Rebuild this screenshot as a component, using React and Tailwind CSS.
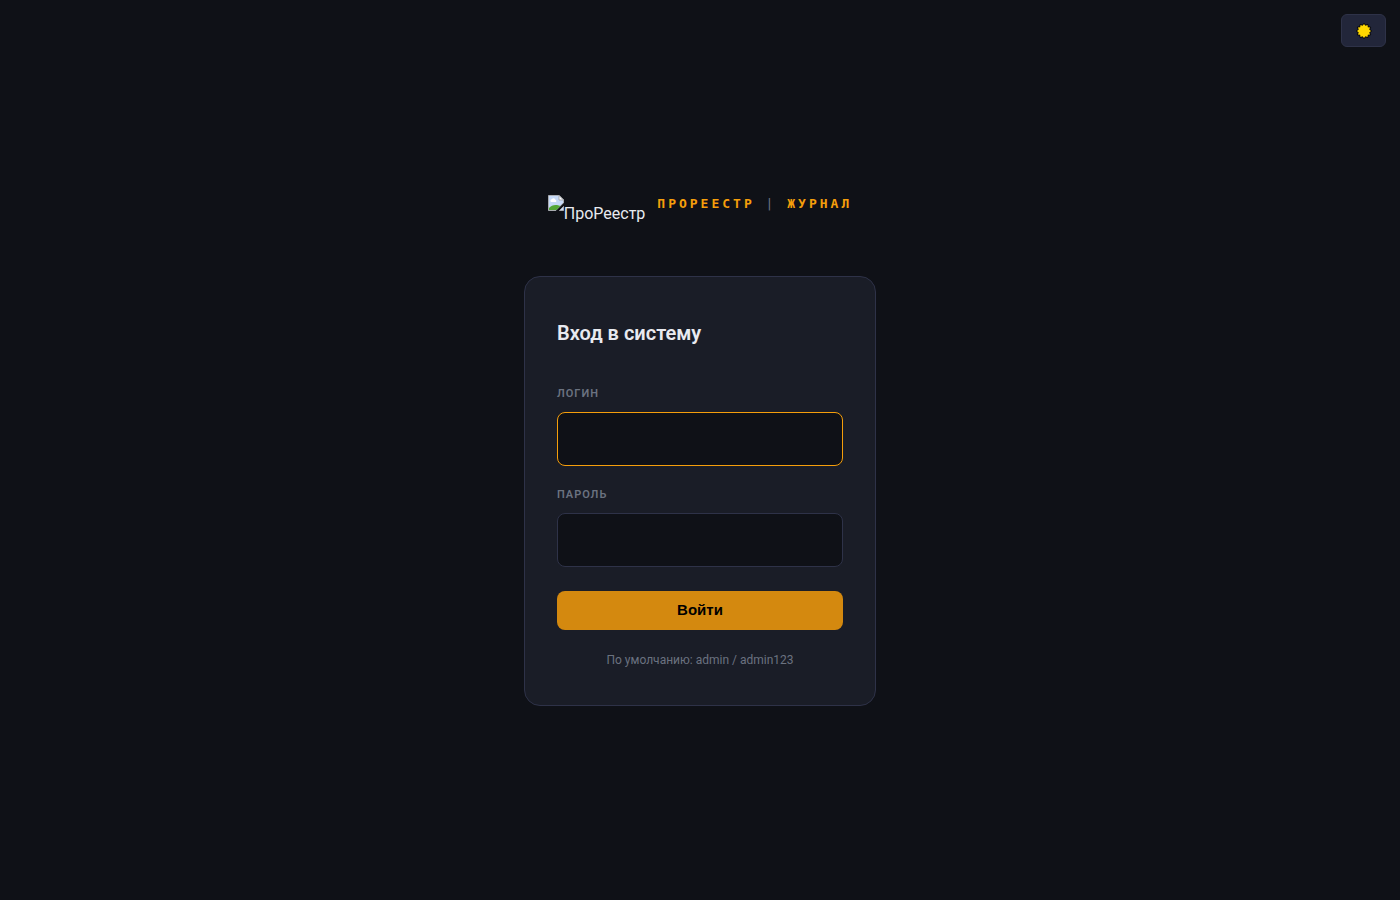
// Login page
const FIELDS = [
  { id: "login", label: "Логин", type: "text", autoFocus: true },
  { id: "password", label: "Пароль", type: "password" },
];

// 12-pointed star, used twice: dark rim and yellow body
function star(outer, inner) {
  return Array.from({ length: 24 }, (_, i) => {
    const r = i % 2 ? inner : outer;
    const a = (i * Math.PI) / 12;
    return `${(8 + r * Math.sin(a)).toFixed(2)},${(8 - r * Math.cos(a)).toFixed(2)}`;
  }).join(" ");
}

// Logo placeholder shown while there is no picture file
function MissingImage() {
  return (
    <svg width="16" height="16" viewBox="0 0 16 16" aria-hidden="true" className="shrink-0">
      <path d="M0.5 0.5H11L15.5 5V8L8 15.5H0.5Z" fill="#c6d9f7" stroke="#a8abb0" />
      <path d="M3 7a1.5 1.5 0 0 1 0.8-2.7 2 2 0 0 1 3.6 0.4 1.3 1.3 0 0 1 0.4 2.3z" fill="#fff" />
      <path d="M1 15V13C3 10.5 6 9.5 9 10L12.5 11 8.5 15Z" fill="#53a636" />
      <path d="M11 0.5V5H15.5Z" fill="#fff" stroke="#a8abb0" />
      <path d="M16 8V10L10 16H8Z" fill="#0f1117" />
      <path d="M15.5 11.5V15.5H11.5Z" fill="#c6d9f7" stroke="#a8abb0" />
    </svg>
  );
}

function SunIcon() {
  return (
    <svg width="16" height="16" viewBox="0 0 16 16" aria-hidden="true">
      <polygon points={star(7.8, 6.2)} fill="#0a0a0a" stroke="#0a0a0a" strokeWidth="0.6" />
      <polygon points={star(7, 5.4)} fill="#ffd800" />
    </svg>
  );
}

function Field({ id, label, type, autoFocus }) {
  return (
    <div className="mb-[19px]">
      <label
        htmlFor={id}
        className="block mb-2 text-[11px] leading-5 font-semibold tracking-[1px] uppercase text-[#6b7280]"
      >
        {label}
      </label>
      <input
        id={id}
        name={id}
        type={type}
        autoFocus={autoFocus}
        className="block w-full h-[54px] px-4 rounded-lg border border-[#2e3248] bg-[#0f1117] text-base text-[#e8eaf0] caret-transparent outline-none focus:border-[#f59e0b]"
      />
    </div>
  );
}

export default function App() {
  return (
    <div className="relative min-h-screen pt-px flex flex-col items-center justify-center bg-[#0f1117] text-[#e8eaf0] font-['Roboto',sans-serif]">
      <button
        type="button"
        aria-label="Тема"
        className="absolute top-3.5 right-3.5 w-[45px] h-[33px] flex items-center justify-center rounded-md border border-[#2e3248] bg-[#22263a]"
      >
        <SunIcon />
      </button>

      <header className="h-[41px] mb-10 flex items-start gap-3">
        <div className="flex items-start">
          <MissingImage />
          <span className="pt-[7px] text-base leading-6">ПроРеестр</span>
        </div>
        <div className="font-['DejaVu_Sans_Mono',monospace] text-[13px] leading-[18px] font-bold tracking-[3px] uppercase text-[#f59e0b]">
          ПроРеестр <span className="font-normal text-[#6b7280]">|</span> Журнал
        </div>
      </header>

      <form className="w-full max-w-[352px] px-8 pt-8 pb-[35px] rounded-2xl border border-[#2e3248] bg-[#1a1d27]">
        <h1 className="mt-2 mb-[35px] text-xl leading-8 font-semibold">Вход в систему</h1>
        {FIELDS.map((field) => (
          <Field key={field.id} {...field} />
        ))}
        <button
          type="button"
          className="mt-[5px] w-full h-[39px] rounded-lg bg-[#d4890f] text-[15px] font-bold text-black font-['Liberation_Sans',sans-serif]"
        >
          Войти
        </button>
        <p className="mt-5 text-center text-xs leading-5 text-[#6b7280]">
          По умолчанию: admin / admin123
        </p>
      </form>
    </div>
  );
}
